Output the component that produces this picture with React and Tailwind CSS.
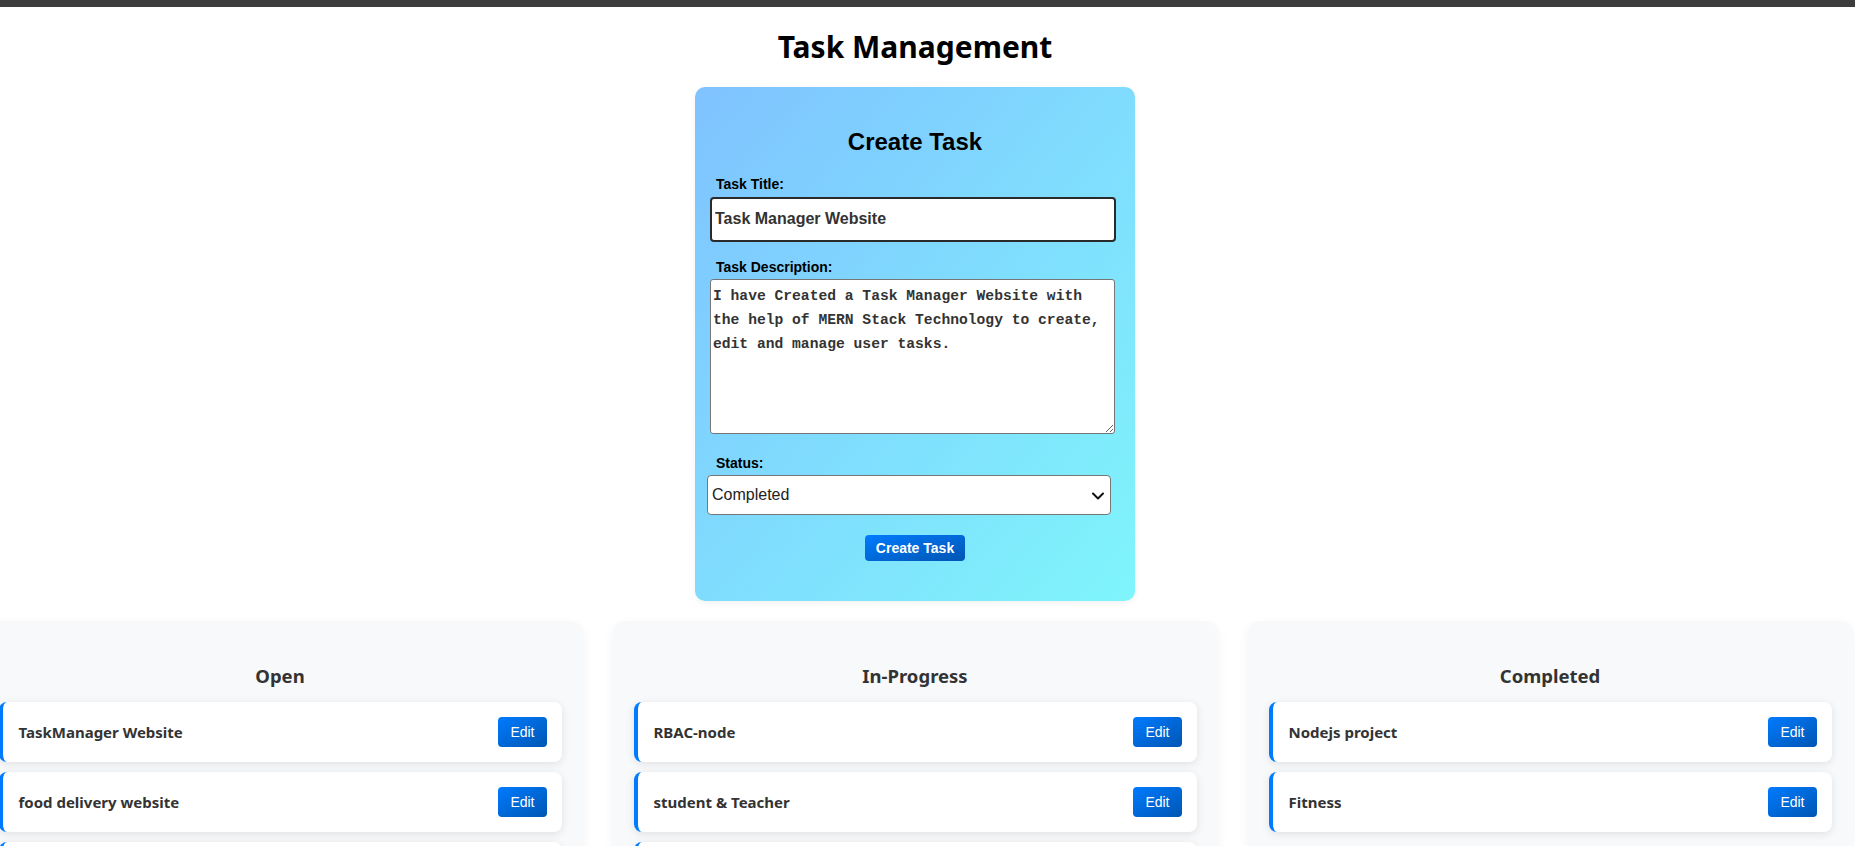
import React from 'react';

// Task board data: one list per status column
const columns = [
  { title: 'Open', tasks: ['TaskManager Website', 'food delivery website', 'Portfolio website'] },
  { title: 'In-Progress', tasks: ['RBAC-node', 'student & Teacher', 'Chat application'] },
  { title: 'Completed', tasks: ['Nodejs project', 'Fitness'] },
];

const arial = "font-['Liberation_Sans',Arial,sans-serif]";
const ui = "font-['Noto_Sans','Open_Sans',sans-serif]";

function TaskCard({ name }) {
  return (
    <div className="flex items-center justify-between rounded-[8px] border-l-4 border-[#007bff] bg-white py-[15px] pl-[16px] pr-[15px] shadow-[0_2px_8px_rgba(0,0,0,0.1)]">
      <span className={`${ui} text-[15px] font-bold leading-[20px] text-[#333]`}>{name}</span>
      <button
        className={`${arial} h-[30px] rounded-[4px] bg-linear-to-br from-[#007bff] to-[#0056b3] px-[12px] text-[14px] leading-[16px] text-white`}
      >
        Edit
      </button>
    </div>
  );
}

function Column({ title, tasks }) {
  return (
    <div className="w-[605px] shrink-0 rounded-[12px] bg-[#f8f9fa] px-[21px] pt-[20px] pb-[20px] shadow-[0_4px_12px_rgba(0,0,0,0.05)]">
      <h3 className={`${ui} mt-[23px] mb-[14px] text-center text-[18.5px] font-bold leading-[24px] text-[#333]`}>
        {title}
      </h3>
      <div className="flex flex-col gap-[10px]">
        {tasks.map((t) => (
          <TaskCard key={t} name={t} />
        ))}
      </div>
    </div>
  );
}

export default function App() {
  return (
    <div className="h-[846px] overflow-hidden bg-white">
      {/* ── top strip ───────────────────────────────────────── */}
      <div className="h-[7px] bg-[#3c3c3c]" />

      <div className="w-[1830px]">
        <h1 className={`${ui} mt-[20px] text-center text-[30px] font-bold leading-[40px] text-black`}>
          Task Management
        </h1>

        {/* ── create task form ──────────────────────────────── */}
        <div
          className={`${arial} mx-auto mt-[20px] w-[440px] rounded-[10px] bg-linear-to-br from-[#7fc2ff] to-[#7ff5fb] px-[15px] pt-[20px] pb-[40px] shadow-[0_2px_6px_rgba(0,0,0,0.06)]`}
        >
          <h2 className="mt-[21px] mb-[20px] text-center text-[24px] font-bold leading-[27.6px] text-black">
            Create Task
          </h2>

          <label className="mb-[5px] ml-[6px] block text-[14px] font-bold leading-[16px] text-black">
            Task Title:
          </label>
          <input
            defaultValue="Task Manager Website"
            className="block h-[45px] w-[406px] rounded-[4px] border-2 border-[#2a2a2a] bg-white px-[3px] text-[16px] font-bold text-[#333] outline-none"
          />

          <label className="mt-[17px] mb-[4px] ml-[6px] block text-[14px] font-bold leading-[16px] text-black">
            Task Description:
          </label>
          <textarea
            defaultValue="I have Created a Task Manager Website with the help of MERN Stack Technology to create, edit and manage user tasks."
            className="block h-[155px] w-[405px] resize rounded-[3px] border border-[#767676] bg-white px-[2px] pt-[4px] font-['Liberation_Mono',monospace] text-[14.65px] font-bold leading-[24px] text-[#333] outline-none"
          />

          <label className="mt-[21px] mb-[4px] ml-[6px] block text-[14px] font-bold leading-[16px] text-black">
            Status:
          </label>
          <div className="relative -ml-[3px] w-[404px]">
            <select
              defaultValue="Completed"
              className="block h-[40px] w-full appearance-none rounded-[4px] border border-[#767676] bg-white pl-[4px] text-[16px] text-[#222] outline-none"
            >
              <option>Open</option>
              <option>In-Progress</option>
              <option>Completed</option>
            </select>
            <svg
              className="pointer-events-none absolute right-[7px] top-[17px]"
              width="12"
              height="8"
              viewBox="0 0 12 8"
              fill="none"
            >
              <path d="M1 1.5l5 5 5-5" stroke="#111" strokeWidth="2" strokeLinecap="round" strokeLinejoin="round" />
            </svg>
          </div>

          <div className="mt-[20px] flex justify-center">
            <button className="h-[26px] rounded-[4px] bg-linear-to-br from-[#007bff] to-[#0056b3] px-[11px] text-[14px] font-bold leading-[16px] text-white">
              Create Task
            </button>
          </div>
        </div>

        {/* ── status columns ───────────────────────────────── */}
        <div className="mt-[20px] flex items-start justify-center gap-[30px]">
          {columns.map((c) => (
            <Column key={c.title} title={c.title} tasks={c.tasks} />
          ))}
        </div>
      </div>
    </div>
  );
}
